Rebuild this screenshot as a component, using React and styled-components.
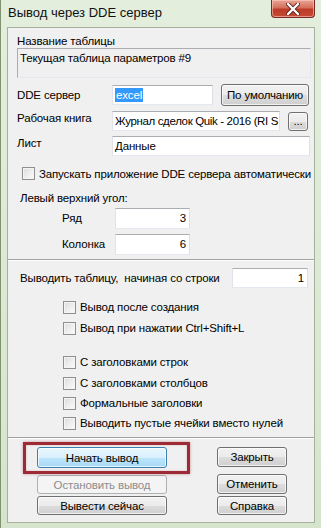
import React from 'react';
import styled, { createGlobalStyle } from 'styled-components';

const GlobalStyle = createGlobalStyle`
  html, body {
    margin: 0;
    padding: 0;
    background: #dce8d4;
  }
  * {
    box-sizing: border-box;
  }
`

const Frame = styled.div`
  width: 321px;
  height: 528px;
  display: flex;
  flex-direction: column;
  background: linear-gradient(#e4eedd, #d6e4ce);
  border-left: 1px solid #7f936f;
  font-family: "Liberation Sans", Arial, sans-serif;
  font-size: 11.5px;
  letter-spacing: -0.15px;
  color: #000;
  overflow: hidden;
`

const TitleBar = styled.div`
  height: 27px;
  display: flex;
  align-items: flex-start;
  flex-shrink: 0;
`

const Title = styled.div`
  font-size: 13px;
  letter-spacing: 0;
  padding: 5px 0 0 7px;
  flex: 1;
  color: #111;
`

const CloseButton = styled.div`
  width: 44px;
  height: 18px;
  margin-right: 6px;
  border: 1px solid #7a2a22;
  border-top: none;
  border-radius: 0 0 4px 4px;
  background: linear-gradient(#e9a593 0%, #d4705c 45%, #bd3b27 55%, #c64b36 100%);
  box-shadow: inset 0 0 0 1px rgba(255, 210, 200, 0.55);
  display: flex;
  align-items: center;
  justify-content: center;
`

const Client = styled.div`
  flex: 1;
  margin: 0 6px 5px 6px;
  background: #f0f0f0;
  border: 1px solid #a4b299;
  display: flex;
  flex-direction: column;
`

const Section = styled.div`
  display: flex;
  flex-direction: column;
  padding: ${p => p.$pad || '0'};
`

const Divider = styled.div`
  height: 2px;
  border-top: 1px solid #a0a0a0;
  border-bottom: 1px solid #ffffff;
  margin-top: ${p => p.$top || 0}px;
`

const Label = styled.div`
  line-height: 14px;
  white-space: nowrap;
  margin-top: ${p => p.$top || 0}px;
  padding-left: ${p => p.$indent || 0}px;
`

const ReadOnlyBox = styled.div`
  height: 30px;
  margin-right: 2px;
  border: 1px solid #abadb3;
  border-right-color: #e3e9ef;
  border-bottom-color: #e3e9ef;
  background: #f0f0f0;
  padding: 2px 0 0 2px;
  line-height: 14px;
`

const Row = styled.div`
  display: flex;
  align-items: center;
  height: ${p => p.$h || 22}px;
  margin-top: ${p => p.$top || 0}px;
  padding-left: ${p => p.$indent || 0}px;
`

const RowLabel = styled.div`
  width: ${p => p.$w}px;
  flex-shrink: 0;
  white-space: nowrap;
  align-self: ${p => (p.$raise ? 'flex-start' : 'center')};
  padding-top: ${p => (p.$raise ? 2 : 0)}px;
`

const TextInput = styled.div`
  height: ${p => p.$h || 20}px;
  width: ${p => (p.$w ? `${p.$w}px` : 'auto')};
  flex: ${p => (p.$w ? '0 0 auto' : '1')};
  background: #fff;
  border: 1px solid #abadb3;
  border-right-color: #dbdfe6;
  border-bottom-color: #e3e9ef;
  border-left-color: #e2e3ea;
  padding: 0 3px 0 2px;
  display: flex;
  align-items: center;
  justify-content: ${p => (p.$right ? 'flex-end' : 'flex-start')};
  white-space: nowrap;
  overflow: hidden;
  margin-right: ${p => p.$mr || 0}px;
  letter-spacing: ${p => (p.$tight ? '-0.35px' : '-0.15px')};
`

const Selected = styled.span`
  background: #3399ff;
  color: #fff;
  padding: 0 1px;
  line-height: 14px;
`

const Button = styled.div`
  height: ${p => p.$h || 21}px;
  width: ${p => p.$w}px;
  flex-shrink: 0;
  border: 1px solid ${p => (p.$focus ? '#3c7fb1' : p.$disabled ? '#adb2b5' : '#707070')};
  border-radius: 3px;
  background: ${p =>
    p.$focus
      ? 'linear-gradient(#eaf6fd 0%, #d9f0fc 50%, #bee6fd 51%, #a7d9f5 100%)'
      : p.$disabled
      ? '#f4f4f4'
      : 'linear-gradient(#f2f2f2 0%, #ebebeb 50%, #dddddd 51%, #cfcfcf 100%)'};
  box-shadow: inset 0 0 0 1px ${p => (p.$disabled ? 'transparent' : 'rgba(255,255,255,0.7)')};
  color: ${p => (p.$disabled ? '#8d8d8d' : '#000')};
  display: flex;
  align-items: center;
  justify-content: center;
  white-space: nowrap;
`

const CheckRow = styled.div`
  display: flex;
  align-items: center;
  gap: 4px;
  height: ${p => p.$h || 20}px;
  margin-top: ${p => p.$top || 0}px;
  padding-left: ${p => p.$indent || 0}px;
  white-space: nowrap;
`

const Box = styled.span`
  width: 13px;
  height: 13px;
  flex-shrink: 0;
  border: 1px solid #8f8f8f;
  background: linear-gradient(135deg, #dcdcdc 0%, #f0f0f0 60%, #fbfbfb 100%);
  box-shadow: inset 0 0 0 1px #f4f4f4;
`

const ButtonArea = styled.div`
  display: grid;
  grid-template-columns: 130px 70px;
  column-gap: 50px;
  padding: 8px 0 0 29px;
`

const ButtonColumn = styled.div`
  display: flex;
  flex-direction: column;
  gap: ${p => p.$gap || 4}px;
`

const FocusWrap = styled.div`
  position: relative;
`

const Highlight = styled.div`
  position: absolute;
  top: -5px;
  bottom: -6px;
  left: -14px;
  right: -23px;
  border: 3px solid #9e2a35;
  box-shadow: 0 0 3px rgba(158, 42, 53, 0.45), inset 0 0 2px rgba(158, 42, 53, 0.35);
  pointer-events: none;
`

const Check = ({ children, ...rest }) => (
  <CheckRow {...rest}>
    <Box />
    <span>{children}</span>
  </CheckRow>
)

export default function App() {
  return (
    <>
      <GlobalStyle />
      <Frame>
        <TitleBar>
          <Title>Вывод через DDE сервер</Title>
          <CloseButton>
            <svg width="14" height="12" viewBox="0 0 14 12">
              <path d="M2 1 L12 11 M12 1 L2 11" stroke="#5a2018" strokeWidth="4" strokeLinecap="round" />
              <path d="M2 1 L12 11 M12 1 L2 11" stroke="#ffffff" strokeWidth="2.4" strokeLinecap="round" />
            </svg>
          </CloseButton>
        </TitleBar>

        <Client>
          <Section $pad="6px 1px 0 9px">
            <Label>Название таблицы</Label>
            <ReadOnlyBox>Текущая таблица параметров #9</ReadOnlyBox>

            <Row $top={6}>
              <RowLabel $w={95}>DDE сервер</RowLabel>
              <TextInput $w={101} $mr={8}>
                <Selected>excel</Selected>
              </TextInput>
              <Button $w={88} $h={22}>По умолчанию</Button>
            </Row>

            <Row $top={4}>
              <RowLabel $w={95} $raise>Рабочая книга</RowLabel>
              <TextInput $w={168} $mr={8} $tight>Журнал сделок Quik - 2016 (RI S</TextInput>
              <Button $w={20} $h={19}>...</Button>
            </Row>

            <Row $top={3}>
              <RowLabel $w={95} $raise>Лист</RowLabel>
              <TextInput $mr={3}>Данные</TextInput>
            </Row>

            <CheckRow $top={9} $h={15} $indent={5}>
              <Box />
              <span>Запускать приложение DDE сервера автоматически</span>
            </CheckRow>

            <Label $top={10} $indent={3}>Левый верхний угол:</Label>

            <Row $top={2} $indent={45}>
              <RowLabel $w={53}>Ряд</RowLabel>
              <TextInput $w={75} $h={21} $right>3</TextInput>
            </Row>
            <Row $top={4} $indent={45}>
              <RowLabel $w={53}>Колонка</RowLabel>
              <TextInput $w={75} $h={21} $right>6</TextInput>
            </Row>
          </Section>

          <Divider $top={4} />

          <Section $pad="0 0 0 12px">
            <Row $top={6}>
              <RowLabel $w={212}>Выводить таблицу,&nbsp; начиная со строки</RowLabel>
              <TextInput $w={76} $right>1</TextInput>
            </Row>

            <Check $top={8} $indent={43}>Вывод после создания</Check>
            <Check $top={1} $indent={43}>Вывод при нажатии Ctrl+Shift+L</Check>
            <Check $top={14} $indent={43}>С заголовками строк</Check>
            <Check $top={1} $indent={43}>С заголовками столбцов</Check>
            <Check $top={0} $indent={43}>Формальные заголовки</Check>
            <Check $top={0} $indent={43}>Выводить пустые ячейки вместо нулей</Check>
          </Section>

          <Divider $top={4} />

          <ButtonArea>
            <ButtonColumn $gap={7}>
              <FocusWrap>
                <Button $w={130} $focus>Начать вывод</Button>
                <Highlight />
              </FocusWrap>
              <ButtonColumn $gap={2}>
                <Button $w={130} $h={19} $disabled>Остановить вывод</Button>
                <Button $w={130} $h={19}>Вывести сейчас</Button>
              </ButtonColumn>
            </ButtonColumn>
            <ButtonColumn $gap={7}>
              <Button $w={70} $h={20}>Закрыть</Button>
              <ButtonColumn $gap={2}>
                <Button $w={70} $h={20}>Отменить</Button>
                <Button $w={70} $h={19}>Справка</Button>
              </ButtonColumn>
            </ButtonColumn>
          </ButtonArea>
        </Client>
      </Frame>
    </>
  );
}
